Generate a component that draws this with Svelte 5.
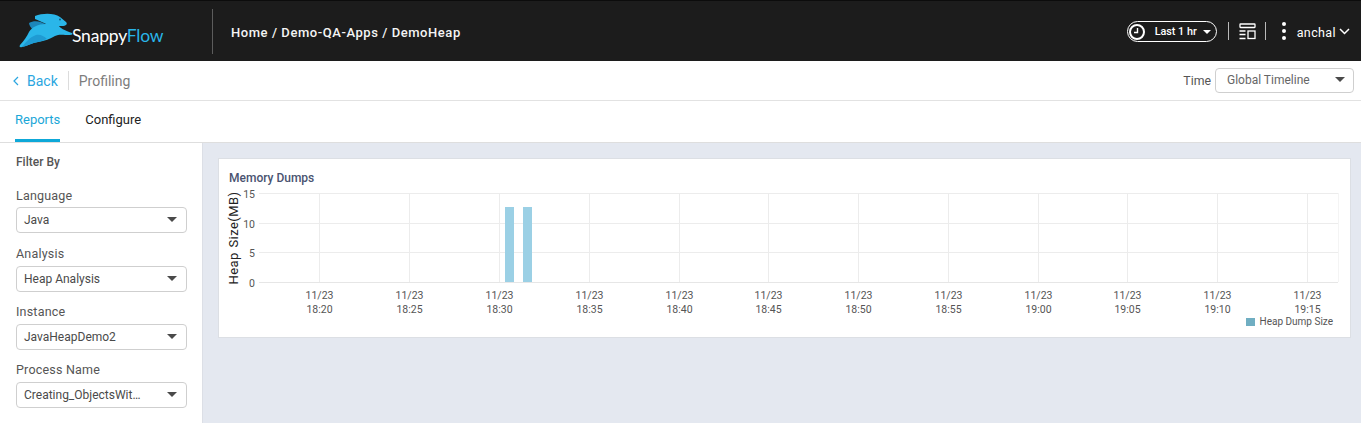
<script>
  const filters = [
    { label: 'Language', value: 'Java' },
    { label: 'Analysis', value: 'Heap Analysis' },
    { label: 'Instance', value: 'JavaHeapDemo2' },
    { label: 'Process Name', value: 'Creating_ObjectsWit…' }
  ];

  const times = ['18:20', '18:25', '18:30', '18:35', '18:40', '18:45', '18:50', '18:55', '19:00', '19:05', '19:10', '19:15'];
  const ticks = [
    { label: 15, y: 35.5 },
    { label: 10, y: 65.5 },
    { label: 5, y: 94.5 },
    { label: 0, y: 124.5 }
  ];
  const tickX = (i) => Math.round(101.3 + i * 89.8) + 0.5;
</script>

<div class="page">
  <header class="topbar">
    <div class="brand">
      <svg class="rabbit" width="58" height="36" viewBox="0 0 58 36" aria-hidden="true">
        <path fill="#1c86bb" d="M13 11C18 8 25 9 31 13C25 13 20 15 17 18C15 16 13 13 13 11Z" />
        <path fill="#2ab6e9" d="M19 4C27 1 38 1 44 5L50 10C52 12 50 14 46 14L43 14C44 16 48 18 56 21C57 22 56 23 54 23C47 23 43 22 39 24C34 27 29 29 22 30C16 31 11 34 6 35C4 35.500 3 35 4 33C8 29 11 24 13 20C16 15 22 12 30 12C26 10 22 8 19 7Z" />
        <path fill="#1f9bd3" d="M6 35C10 30 14 25 20 23C24 22 28 24 31 27C28 28 25 29.500 22 30C16 31 11 34 6 35Z" />
        <circle cx="44" cy="7.500" r="0.900" fill="#14506f" />
      </svg>
      <span class="wordmark">Snappy<span class="flow">Flow</span></span>
    </div>
    <div class="crumbs">Home / Demo-QA-Apps / DemoHeap</div>
    <div class="top-actions">
      <div class="range">
        <svg width="18" height="18" viewBox="0 0 18 18" aria-hidden="true">
          <circle cx="9" cy="9" r="7" fill="none" stroke="#fff" stroke-width="2" />
          <path d="M9.500 5v4.500H6" fill="none" stroke="#fff" stroke-width="1.400" />
        </svg>
        <span>Last 1 hr</span>
        <i class="caret small"></i>
      </div>
      <span class="vline"></span>
      <svg class="layout-icon" width="17" height="17" viewBox="0 0 17 17" aria-hidden="true">
        <rect x="1" y="1" width="15" height="3.500" rx="0.500" fill="none" stroke="#fff" stroke-width="1.300" />
        <path d="M0.500 8h6M0.500 11.500h6M0.500 15.500h6" stroke="#fff" stroke-width="1.500" />
        <rect x="9" y="8" width="7" height="7.500" fill="none" stroke="#fff" stroke-width="1.300" />
      </svg>
      <span class="vline"></span>
      <div class="dots"><i></i><i></i><i></i></div>
      <span class="user">anchal</span>
      <svg width="11" height="7" viewBox="0 0 11 7" aria-hidden="true">
        <path d="M1 1l4.500 4.500L10 1" fill="none" stroke="#fff" stroke-width="1.500" />
      </svg>
    </div>
  </header>

  <div class="subbar">
    <a class="back" href="#back">
      <svg width="6" height="10" viewBox="0 0 6 10" aria-hidden="true">
        <path d="M5 1L1 5l4 4" fill="none" stroke="#2ba6e0" stroke-width="1.200" />
      </svg>
      Back
    </a>
    <span class="title">Profiling</span>
    <div class="time">
      <span class="time-label">Time</span>
      <div class="select time-select"><span>Global Timeline</span><i class="caret"></i></div>
    </div>
  </div>

  <nav class="tabs">
    <a class="tab active" href="#reports">Reports</a>
    <a class="tab" href="#configure">Configure</a>
  </nav>

  <div class="body">
    <aside class="sidebar">
      <h4>Filter By</h4>
      {#each filters as f}
        <div class="field">
          <div class="field-label">{f.label}</div>
          <div class="select"><span class="value">{f.value}</span><i class="caret"></i></div>
        </div>
      {/each}
    </aside>

    <main class="content">
      <section class="card">
        <h3>Memory Dumps</h3>
        <svg class="chart" width="1131" height="155" viewBox="0 0 1131 155">
          <text class="axis-title" transform="translate(20 80) rotate(-90)" text-anchor="middle">Heap Size(MB)</text>

          {#each ticks as t, i}
            <line x1="41" x2="1120" y1={t.y} y2={t.y} stroke={i === 3 ? '#e6e6e6' : '#ececec'} />
            <text class="tick" x="37" y={t.y + 4} text-anchor="end">{t.label}</text>
          {/each}

          {#each times as t, i}
            <line x1={tickX(i)} x2={tickX(i)} y1="35" y2="124" stroke="#ececec" />
            <text class="tick" x={tickX(i)} y="141" text-anchor="middle">11/23</text>
            <text class="tick" x={tickX(i)} y="155" text-anchor="middle">{t}</text>
          {/each}
          <line x1="1120.500" x2="1120.500" y1="35" y2="124" stroke="#f4f4f4" />

          <rect x="287" y="49" width="9" height="75" fill="#9bd0e5" />
          <rect x="305" y="49" width="9" height="75" fill="#9bd0e5" />
        </svg>
        <div class="legend"><i></i>Heap Dump Size</div>
      </section>
    </main>
  </div>
</div>

<style>
  :global(body) {
    margin: 0;
    font-family: Roboto, "Liberation Sans", sans-serif;
    background: #e4e8f0;
  }

  .page {
    height: 423px;
    overflow: hidden;
    display: flex;
    flex-direction: column;
  }

  .topbar {
    height: 60px;
    flex: none;
    display: flex;
    align-items: center;
    background: #1c1c1c;
    border-top: 1px solid #0c0c0c;
    color: #fff;
  }

  .brand {
    width: 213px;
    height: 45px;
    flex: none;
    box-sizing: border-box;
    padding-left: 16px;
    display: flex;
    align-items: center;
    border-right: 1px solid #5c5c5c;
    margin-right: 18px;
    position: relative;
  }

  .rabbit {
    margin-top: -3px;
    flex: none;
  }

  .wordmark {
    margin-left: -2px;
    margin-top: 8px;
    font-family: Lato, sans-serif;
    font-size: 17.5px;
    letter-spacing: -0.2px;
  }

  .flow {
    color: #29b5e8;
  }

  .crumbs {
    font-size: 13px;
    font-weight: 500;
    letter-spacing: 0.56px;
    margin-top: 3px;
    color: #f4f4f4;
  }

  .top-actions {
    margin-left: auto;
    padding-right: 11px;
    display: flex;
    align-items: center;
    font-size: 12px;
  }

  .range {
    box-sizing: border-box;
    width: 90px;
    height: 21px;
    border: 1px solid #fff;
    border-radius: 11px;
    display: flex;
    align-items: center;
    padding-left: 0;
    font-size: 10.8px;
    font-weight: 500;
    margin-right: 11px;
    margin-top: 1px;
  }

  .range span {
    margin-left: 9px;
    margin-right: 6px;
  }

  .vline {
    width: 1px;
    height: 18px;
    background: #b9b9b9;
  }

  .layout-icon {
    margin: 0 9px 0 10px;
  }

  .dots {
    margin: 0 11px 0 16px;
    display: flex;
    flex-direction: column;
    gap: 3px;
  }

  .dots i {
    width: 4px;
    height: 4px;
    border-radius: 50%;
    background: #fff;
  }

  .user {
    font-size: 12.5px;
    letter-spacing: 0.4px;
    margin-right: 3px;
    margin-top: 2px;
  }

  .caret {
    width: 0;
    height: 0;
    margin-top: -2px;
    border-left: 5px solid transparent;
    border-right: 5px solid transparent;
    border-top: 5px solid #4a4a4a;
  }

  .caret.small {
    margin-top: 0;
    border-left-width: 4px;
    border-right-width: 4px;
    border-top: 4px solid #fff;
  }

  .subbar {
    height: 39px;
    flex: none;
    display: flex;
    align-items: center;
    background: #fff;
    border-bottom: 1px solid #e2e2e2;
    font-size: 14px;
  }

  .back {
    display: flex;
    align-items: center;
    gap: 8px;
    padding: 0 10px 0 13px;
    height: 19px;
    color: #2ba6e0;
    text-decoration: none;
    border-right: 1px solid #dcdcdc;
  }

  .title {
    color: #7d7d7d;
    margin-left: 10px;
  }

  .time {
    margin-left: auto;
    margin-right: 7px;
    display: flex;
    align-items: center;
    gap: 4px;
  }

  .time-label {
    font-size: 12.3px;
    color: #555;
  }

  .select {
    box-sizing: border-box;
    height: 26px;
    display: flex;
    align-items: center;
    justify-content: space-between;
    border: 1px solid #cfcfcf;
    border-radius: 4px;
    background: #fff;
    padding: 0 9px 0 7px;
    font-size: 12px;
    color: #4a4a4a;
  }

  .time-select {
    width: 139px;
    height: 25px;
    padding-left: 11px;
    padding-right: 8px;
    color: #666;
  }

  .time-select span {
    margin-top: -1px;
  }

  .tabs {
    height: 41px;
    flex: none;
    display: flex;
    background: #fff;
    border-bottom: 1px solid #dedede;
    padding-left: 15px;
    gap: 25px;
    font-size: 13px;
  }

  .tab {
    height: 41px;
    box-sizing: border-box;
    padding-top: 11px;
    color: #222;
    text-decoration: none;
  }

  .tab.active {
    color: #1ba7d8;
    border-bottom: 3px solid #0ea8d8;
  }

  .body {
    flex: 1;
    display: flex;
    min-height: 0;
  }

  .sidebar {
    width: 203px;
    flex: none;
    box-sizing: border-box;
    padding: 12px 15px 0 16px;
    background: #fff;
    border-right: 1px solid #dcdfe6;
  }

  .sidebar h4 {
    margin: 0 0 20px;
    font-size: 12px;
    line-height: 14px;
    font-weight: 500;
    color: #555;
  }

  .field {
    margin-bottom: 13px;
  }

  h4 + .field {
    margin-bottom: 14px;
  }

  .field-label {
    font-size: 12.5px;
    line-height: 14px;
    color: #555;
    margin-bottom: 5px;
    letter-spacing: 0.2px;
  }

  h4 + .field .field-label {
    margin-bottom: 4px;
  }

  .value {
    white-space: nowrap;
  }

  .content {
    flex: 1;
    padding: 15px 10px 0 15px;
  }

  .card {
    box-sizing: border-box;
    height: 180px;
    background: #fff;
    border: 1px solid #dcdfe4;
    position: relative;
    padding-top: 12px;
  }

  .card h3 {
    margin: 0 0 0 10px;
    font-size: 12px;
    line-height: 14px;
    font-weight: 500;
    color: #4a5370;
  }

  .chart {
    display: block;
    margin-top: -27px;
    margin-left: -1px;
    overflow: visible;
  }

  .tick {
    font-family: Roboto, sans-serif;
    font-size: 10.5px;
    fill: #555;
  }

  .axis-title {
    font-family: Roboto, sans-serif;
    font-size: 13px;
    letter-spacing: 0.45px;
    word-spacing: 1px;
    fill: #222;
  }

  .legend {
    position: absolute;
    right: 17px;
    bottom: 10px;
    display: flex;
    align-items: center;
    gap: 5px;
    font-size: 10px;
    color: #555;
  }

  .legend i {
    width: 9px;
    height: 8px;
    background: #70aec2;
  }
</style>
